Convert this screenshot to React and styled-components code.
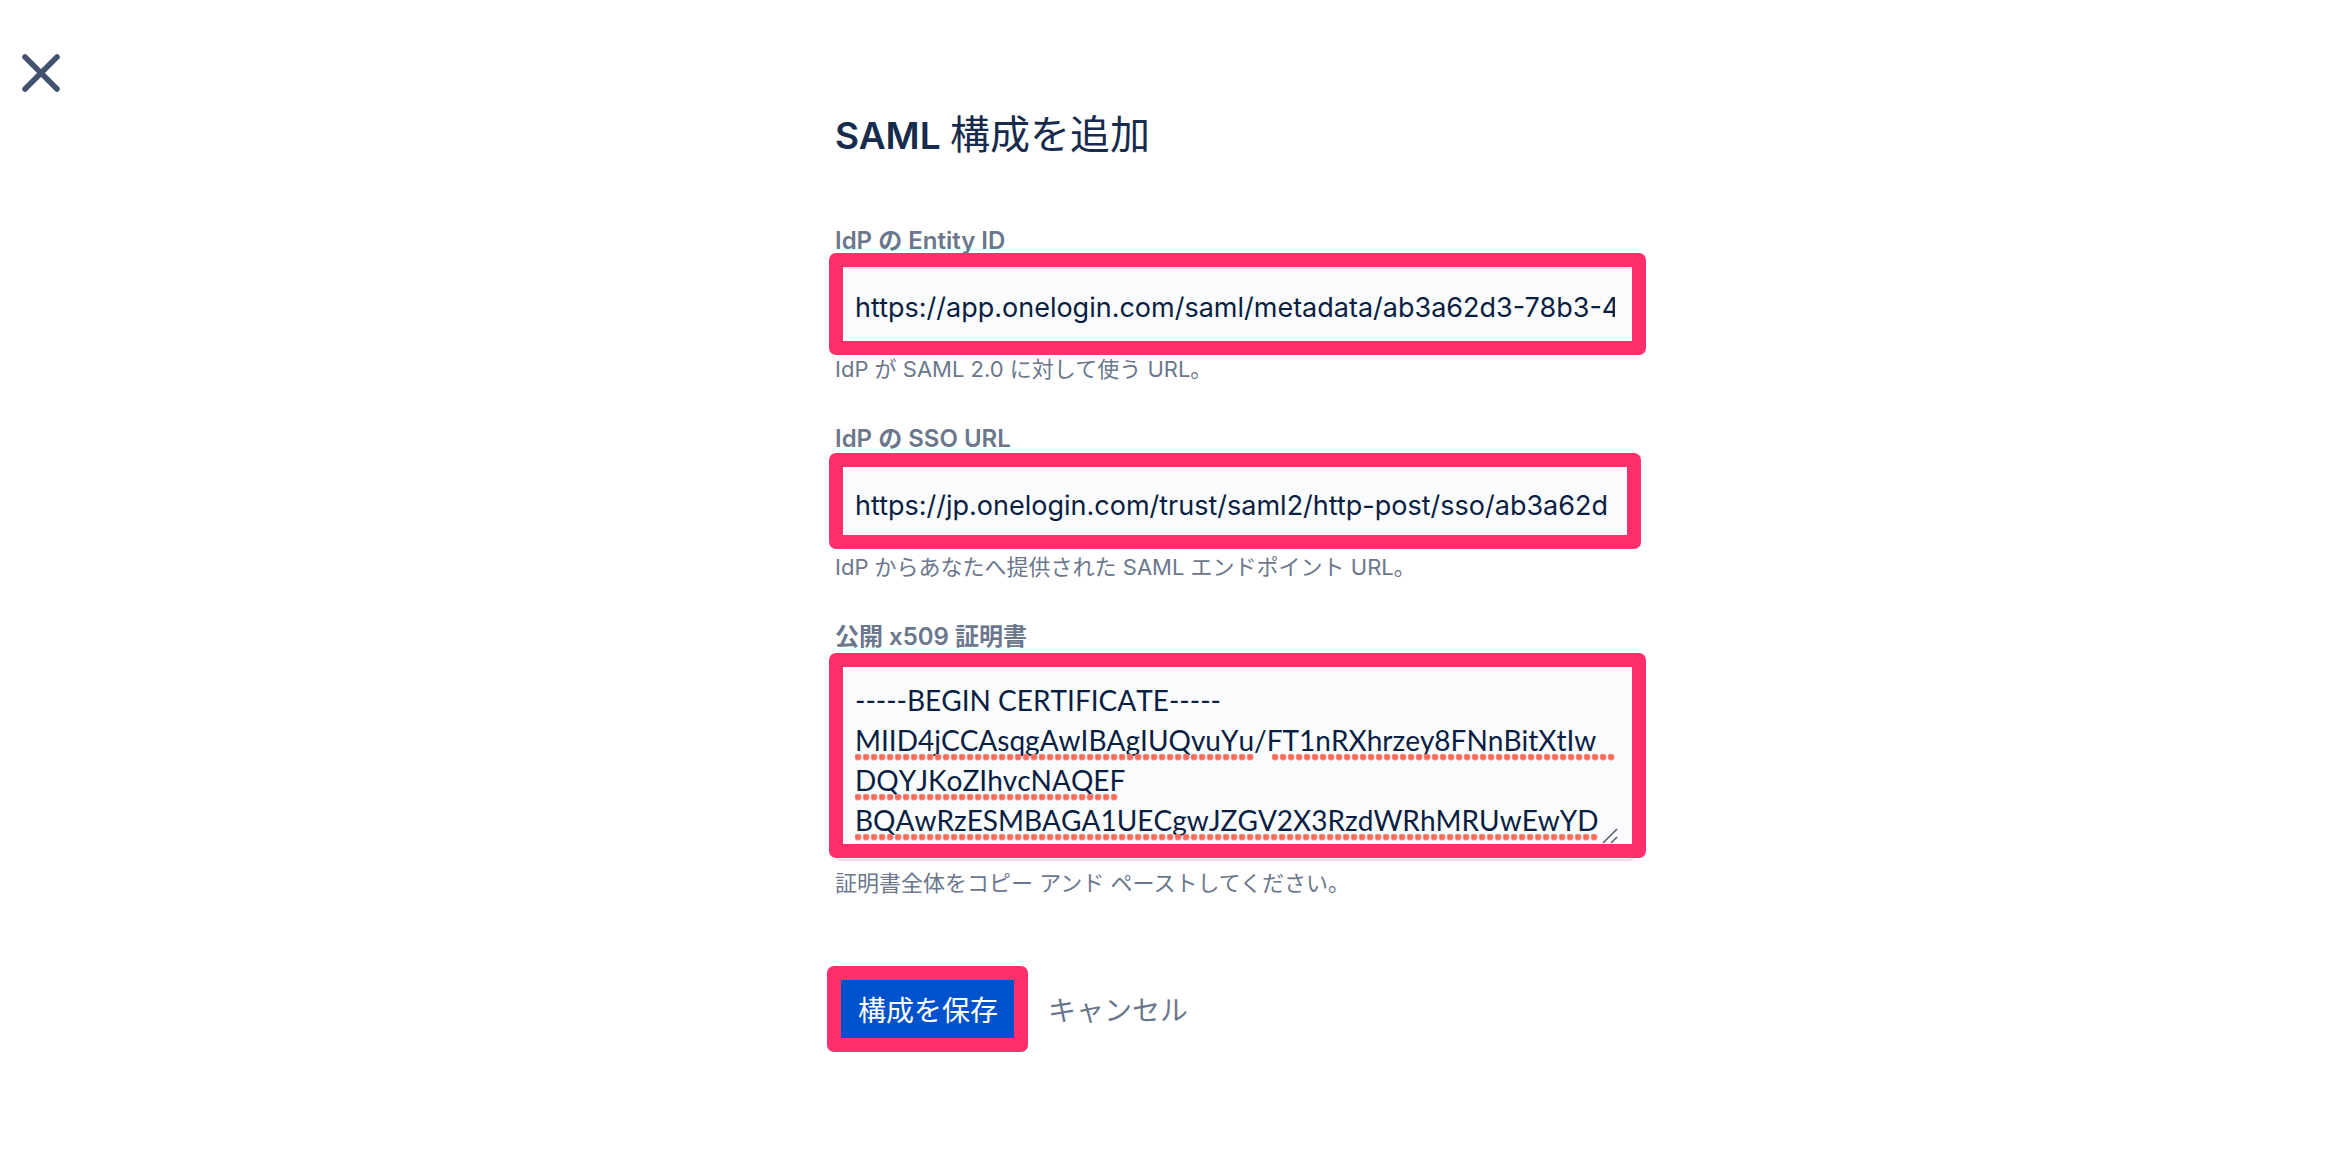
import React from "react";
import { useState } from "react";
import styled, { createGlobalStyle } from "styled-components";

const GlobalStyle = createGlobalStyle`
  * {
    box-sizing: border-box;
  }

  body {
    margin: 0;
    background-color: #ffffff;
    color: #172b4d;
    font-family: Inter, "Noto Sans CJK JP", sans-serif;
  }
`;

const Container = styled.div`
  display: flex;
  min-height: 100vh;
`;

const Side = styled.div`
  flex: 0 0 130px;
  padding: 52px 20px;
`;

const CloseButton = styled.button`
  display: flex;
  padding: 0;
  border: none;
  background: none;
  cursor: pointer;
`;

const Main = styled.main`
  display: flex;
  flex: 1;
  justify-content: center;
  padding: 112px 0 80px;
`;

const Form = styled.form`
  width: 100%;
  max-width: 800px;
`;

const Title = styled.h1`
  margin: 0 0 65px;
  font-size: 37px;
  font-weight: 600;
  line-height: 48px;

  span {
    font-size: 40px;
    font-weight: 400;
    line-height: 40px;
  }
`;

const Field = styled.div`
  display: flex;
  flex-direction: column;
  margin-bottom: 40px;
`;

const Label = styled.label`
  margin-bottom: 10px;
  color: #6b778c;
  font-size: 24px;
  font-weight: 600;
  line-height: 32px;
`;

const Control = styled.div`
  position: relative;
`;

const Input = styled.input`
  display: block;
  width: 100%;
  height: 80px;
  padding: 0 18px;
  border: 2px solid #dfe1e6;
  border-radius: 6px;
  background-color: #fafbfc;
  color: #091e42;
  font-family: inherit;
  font-size: 27px;
  outline: none;
`;

const TextArea = styled.textarea`
  display: block;
  width: 100%;
  height: 198px;
  padding: 15px 18px 12px;
  border: 2px solid #dfe1e6;
  border-radius: 6px;
  background-color: #fafbfc;
  color: #091e42;
  font-family: Lato, "Noto Sans CJK JP", sans-serif;
  font-size: 28px;
  font-kerning: none;
  line-height: 40px;
  white-space: pre;
  overflow: hidden;
  resize: none;
  outline: none;
`;

const Help = styled.p`
  margin: 8px 0 0;
  color: #6b778c;
  font-size: 22px;
  line-height: 28px;
`;

const Actions = styled.div`
  display: flex;
  gap: 4px;
  padding-top: 40px;
`;

const Button = styled.button`
  height: 64px;
  padding: 0 23px;
  border: none;
  border-radius: 6px;
  background-color: ${({ $primary }) => ($primary ? "#0052cc" : "transparent")};
  color: ${({ $primary }) => ($primary ? "#ffffff" : "#6b778c")};
  font-family: inherit;
  font-size: 28px;
  font-weight: 400;
  cursor: pointer;
`;

// thick outline that sits over a control
const Highlight = styled.div`
  position: absolute;
  inset: ${({ $inset }) => $inset};
  border-radius: 7px;
  border: 14px solid #ff2f6c;
  pointer-events: none;
`;

const Marks = styled.div`
  position: absolute;
  inset: 91px 20px auto;
  display: grid;
  grid-auto-rows: 7px;
  row-gap: 33px;
  pointer-events: none;
`;

const MarkRow = styled.div`
  display: flex;
  gap: 18px;
`;

const Mark = styled.span`
  width: ${({ $width }) => $width}px;
  background: radial-gradient(circle at 3px 3px, #ff6a5e 2px, #ff8378 3px, transparent 4px)
    0 0 / 8px 7px repeat-x;
`;

const Grip = styled.svg`
  position: absolute;
  right: 17px;
  bottom: 17px;
  pointer-events: none;
`;

const certificate = `-----BEGIN CERTIFICATE-----
MIID4jCCAsqgAwIBAgIUQvuYu/FT1nRXhrzey8FNnBitXtIw
DQYJKoZIhvcNAQEF
BQAwRzESMBAGA1UECgwJZGV2X3RzdWRhMRUwEwYD`;

const App = () => {
  const [entityId, setEntityId] = useState(
    "https://app.onelogin.com/saml/metadata/ab3a62d3-78b3-4"
  );
  const [ssoUrl, setSsoUrl] = useState(
    "https://jp.onelogin.com/trust/saml2/http-post/sso/ab3a62d"
  );
  const [cert, setCert] = useState(certificate);

  return (
    <Container>
      <GlobalStyle />
      <Side>
        <CloseButton type="button" aria-label="閉じる">
          <svg width="42" height="42" viewBox="0 0 42 42" fill="none">
            <path
              d="M5 5L37 37M37 5L5 37"
              stroke="#42526e"
              strokeWidth="5.5"
              strokeLinecap="round"
            />
          </svg>
        </CloseButton>
      </Side>
      <Main>
        <Form onSubmit={(e) => e.preventDefault()}>
          <Title>
            SAML <span>構成を追加</span>
          </Title>
          <Field>
            <Label htmlFor="entityId">IdP の Entity ID</Label>
            <Control>
              <Input
                type="text"
                id="entityId"
                value={entityId}
                onChange={(e) => setEntityId(e.target.value)}
              />
              <Highlight $inset="-14px -11px -8px -6px" />
            </Control>
            <Help>IdP が SAML 2.0 に対して使う URL。</Help>
          </Field>
          <Field>
            <Label htmlFor="ssoUrl">IdP の SSO URL</Label>
            <Control>
              <Input
                type="text"
                id="ssoUrl"
                value={ssoUrl}
                onChange={(e) => setSsoUrl(e.target.value)}
              />
              <Highlight $inset="-12px -6px -4px -6px" />
            </Control>
            <Help>IdP からあなたへ提供された SAML エンドポイント URL。</Help>
          </Field>
          <Field>
            <Label htmlFor="cert">公開 x509 証明書</Label>
            <Control>
              <TextArea
                id="cert"
                spellCheck={false}
                value={cert}
                onChange={(e) => setCert(e.target.value)}
              />
              <Marks>
                <MarkRow>
                  <Mark $width={399} />
                  <Mark $width={343} />
                </MarkRow>
                <MarkRow>
                  <Mark $width={263} />
                </MarkRow>
                <MarkRow>
                  <Mark $width={743} />
                </MarkRow>
              </Marks>
              <Grip width="16" height="16" viewBox="0 0 16 16" fill="none">
                <path d="M1 15L15 1M9 15L15 9" stroke="#555b66" strokeWidth="1.5" />
              </Grip>
              <Highlight $inset="-10px -11px 3px -6px" />
            </Control>
            <Help>証明書全体をコピー アンド ペーストしてください。</Help>
          </Field>
          <Actions>
            <Control>
              <Button type="submit" $primary>
                構成を保存
              </Button>
              <Highlight $inset="-11px -7px -11px -8px" />
            </Control>
            <Button type="button">キャンセル</Button>
          </Actions>
        </Form>
      </Main>
    </Container>
  );
};

export default App;
